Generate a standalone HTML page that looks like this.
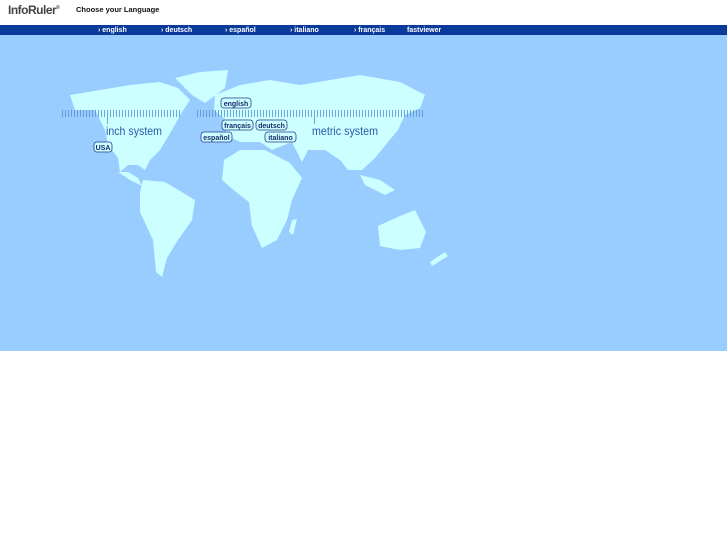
<!DOCTYPE html>
<html><head><meta charset="utf-8"><style>
body{margin:0;width:727px;height:545px;background:#fff;font-family:"Liberation Sans",sans-serif;position:relative;overflow:hidden}
.logo{position:absolute;left:8px;top:3px;font-size:12px;font-weight:bold;color:#444;letter-spacing:-0.5px}
.logo sup{font-size:5px}
.title{position:absolute;left:76px;top:5px;font-size:7.5px;font-weight:bold;color:#111}
.nav{position:absolute;left:0;top:25px;width:727px;height:10px;background:#0a3a9a}
.nav span{position:absolute;top:1px;font-size:7px;font-weight:bold;color:#fff;line-height:10px}
.map{position:absolute;left:0;top:35px;width:727px;height:316px;background:#99ccff}
</style></head><body>
<div class="logo">InfoRuler<sup>®</sup></div>
<div class="title">Choose your Language</div>
<div class="nav">
<span style="left:98px">› english</span>
<span style="left:161px">› deutsch</span>
<span style="left:225px">› español</span>
<span style="left:290px">› italiano</span>
<span style="left:354px">› français</span>
<span style="left:407px">fastviewer</span>
</div>
<div class="map">
<svg width="727" height="316" viewBox="0 35 727 316" xmlns="http://www.w3.org/2000/svg">
<g fill="#ccffff">
<polygon points="70,95 100,90 130,85 160,82 178,88 190,100 182,112 172,130 160,150 150,160 145,170 138,165 128,165 120,172 118,158 108,145 105,130 95,110 75,110"/>
<polygon points="175,78 200,72 228,70 225,88 205,103 192,95"/>
<polygon points="118,172 130,180 142,186 138,178 128,172"/>
<polygon points="143,180 165,182 195,200 192,220 178,240 167,258 162,277 156,272 153,240 140,212 140,192"/>
<polygon points="215,95 240,85 270,80 300,85 330,80 360,75 400,82 425,95 420,108 405,115 398,130 388,142 375,158 362,170 348,170 340,160 325,150 308,150 302,162 292,142 272,150 260,142 240,142 226,135 226,120 214,110"/>
<polygon points="224,160 240,150 265,150 290,163 302,178 292,200 287,220 277,240 262,248 252,226 249,202 236,192 222,180"/>
<polygon points="292,220 297,219 293,235 289,232"/>
<polygon points="378,226 400,216 415,210 426,232 420,248 400,250 380,246"/>
<polygon points="360,175 380,180 395,190 385,195 365,185"/>
<polygon points="430,262 445,252 448,256 432,266"/>
</g>
<g stroke="#5a8fd0" stroke-width="0.8" id="t">
<path d="M62.5 110v7M65.5 110v7M68.5 110v7M71.5 110v7M74.5 110v7M77.5 110v7M80.5 110v7M83.5 110v7M86.5 110v7M89.5 110v7M92.5 110v7M95.5 110v7M98.5 110v7M101.5 110v7M104.5 110v7M107.5 110v14M110.5 110v7M113.5 110v7M116.5 110v7M119.5 110v7M122.5 110v7M125.5 110v7M128.5 110v7M131.5 110v7M134.5 110v7M137.5 110v7M140.5 110v7M143.5 110v7M146.5 110v7M149.5 110v7M152.5 110v7M155.5 110v7M158.5 110v7M161.5 110v7M164.5 110v7M167.5 110v7M170.5 110v7M173.5 110v7M176.5 110v7M179.5 110v7"/>
<path d="M197.5 110v7M200.5 110v7M203.5 110v7M206.5 110v7M209.5 110v7M212.5 110v7M215.5 110v7M218.5 110v7M221.5 110v7M224.5 110v7M227.5 110v7M230.5 110v7M233.5 110v7M236.5 110v7M239.5 110v7M242.5 110v7M245.5 110v7M248.5 110v7M251.5 110v7M254.5 110v7M257.5 110v7M260.5 110v7M263.5 110v7M266.5 110v7M269.5 110v7M272.5 110v7M275.5 110v7M278.5 110v7M281.5 110v7M284.5 110v7M287.5 110v7M290.5 110v7M293.5 110v7M296.5 110v7M299.5 110v7M302.5 110v7M305.5 110v7M308.5 110v7M311.5 110v7M314.5 110v14M317.5 110v7M320.5 110v7M323.5 110v7M326.5 110v7M329.5 110v7M332.5 110v7M335.5 110v7M338.5 110v7M341.5 110v7M344.5 110v7M347.5 110v7M350.5 110v7M353.5 110v7M356.5 110v7M359.5 110v7M362.5 110v7M365.5 110v7M368.5 110v7M371.5 110v7M374.5 110v7M377.5 110v7M380.5 110v7M383.5 110v7M386.5 110v7M389.5 110v7M392.5 110v7M395.5 110v7M398.5 110v7M401.5 110v7M404.5 110v7M407.5 110v7M410.5 110v7M413.5 110v7M416.5 110v7M419.5 110v7M422.5 110v7"/>
</g>
<g font-family="Liberation Sans, sans-serif" fill="#2a5aa8" font-size="12">
<text x="106" y="135" textLength="56" lengthAdjust="spacingAndGlyphs">inch system</text>
<text x="312" y="135" textLength="66" lengthAdjust="spacingAndGlyphs">metric system</text>
</g>
<g stroke="#2a3a8a" stroke-width="0.8" fill="#ccffff">
<rect x="221" y="98" width="30" height="10" rx="3"/>
<rect x="222" y="120" width="31" height="10" rx="3"/>
<rect x="256" y="120" width="31" height="10" rx="3"/>
<rect x="201" y="132" width="31" height="10" rx="3"/>
<rect x="265" y="132" width="31" height="10" rx="3"/>
<rect x="94" y="142" width="18" height="10" rx="3"/>
</g>
<g font-family="Liberation Sans, sans-serif" font-size="7" font-weight="bold" fill="#1a2a6a" text-anchor="middle">
<text x="236" y="106">english</text>
<text x="237.5" y="128">français</text>
<text x="271.5" y="128">deutsch</text>
<text x="216.5" y="140">español</text>
<text x="280.5" y="140">italiano</text>
<text x="103" y="150">USA</text>
</g>
</svg>
</div>
</body></html>
